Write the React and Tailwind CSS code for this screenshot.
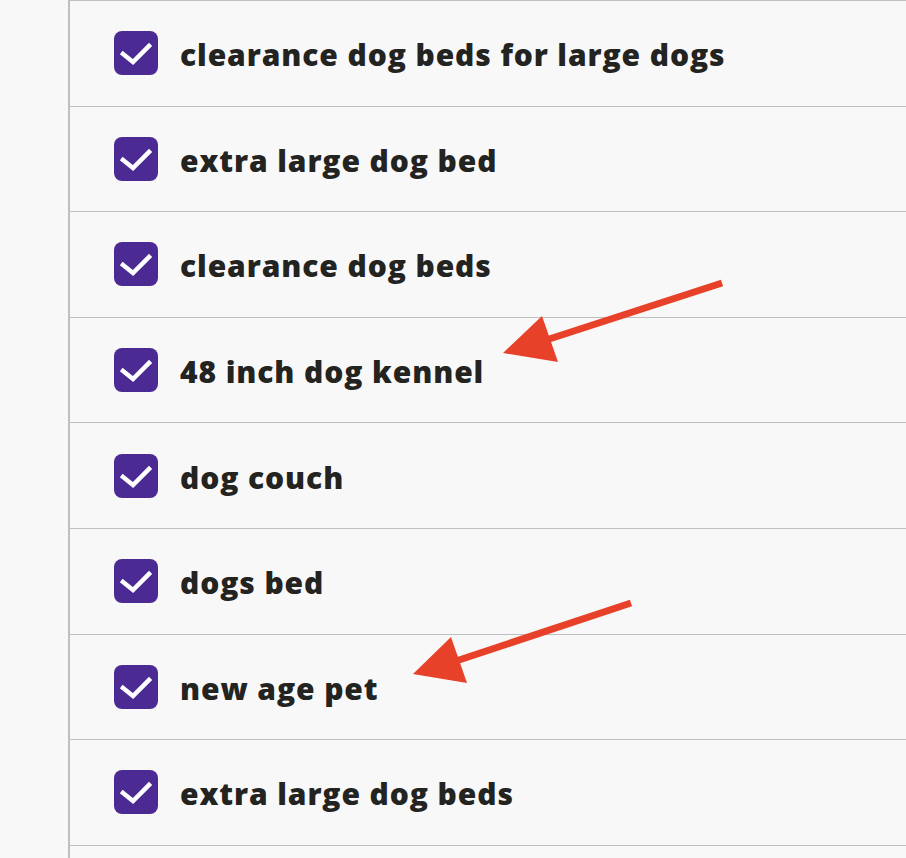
import React from 'react';

const keywords = [
    'clearance dog beds for large dogs',
    'extra large dog bed',
    'clearance dog beds',
    '48 inch dog kennel',
    'dog couch',
    'dogs bed',
    'new age pet',
    'extra large dog beds',
];

function CheckBox() {
    return (
        <div className="w-[44px] h-[44px] rounded-[8px] bg-[#4b2a94] flex-none">
            <svg viewBox="0 0 44 44" width="44" height="44">
                <polyline points="9,23 19,31 35,15" fill="none" stroke="#fff" strokeWidth="4.5" strokeLinecap="square" />
            </svg>
        </div>
    );
}

function Arrow({ x1, y1, x2, y2, head }) {
    return (
        <g>
            <line x1={x1} y1={y1} x2={x2} y2={y2} stroke="#e8412a" strokeWidth="7" />
            <polygon points={head} fill="#e8412a" />
        </g>
    );
}

export default function App() {
    return (
        <div className="relative w-[906px] h-[858px] overflow-hidden bg-[#f8f8f8] flex" style={{ fontFamily: '"Open Sans", "Liberation Sans", sans-serif' }}>
            {/* left gutter */}
            <div className="w-[68px] flex-none" />

            <div className="flex-1 border-l-2 border-[#bfbfbf] border-t-[1.5px] border-t-[#bfbfbf]">
                {keywords.map((k) => (
                    <div key={k} className="h-[105.6px] border-b-[1.5px] border-[#bfbfbf] flex items-center pl-[44px] gap-[22px]">
                        <CheckBox />
                        <span className="mt-[4px] text-[30px] font-extrabold text-[#23231f] tracking-[0.9px] leading-none">{k}</span>
                    </div>
                ))}
            </div>

            {/* annotation arrows */}
            <svg className="absolute inset-0 pointer-events-none" width="906" height="858">
                <Arrow x1={722} y1={283} x2={540} y2={342} head="503,353 542,316 558,362" />
                <Arrow x1={631} y1={603} x2={450} y2={663} head="413,674 451,637 467,683" />
            </svg>
        </div>
    );
}
